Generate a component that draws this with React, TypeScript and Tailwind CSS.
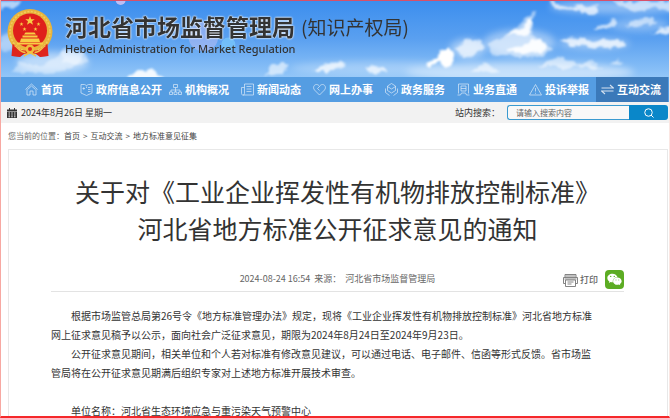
import { type ReactNode } from "react";
import { FaWeixin } from "react-icons/fa";

type NavItem = { label: string; icon: ReactNode };

const navItems: NavItem[] = [
    { label: "首页", icon: <path d="M1 13 13 2l12 11M4 13v11h6v-8h6v8h6V13M5 13l8-7 8 7" /> },
    { label: "政府信息公开", icon: <path d="M2 3h7l4 2 4-2h7v17l-11 5-11-5zM13 7v3M16 9h5M16 13h5M16 17h5M5 11h5M7.500 8.500v5" /> },
    { label: "机构概况", icon: <path d="M9 3h8v6H9zM13 9v5M4 18v-4h18v4M13 14v4M1 18h6v5H1zM10 18h6v5h-6zM19 18h6v5h-6z" /> },
    { label: "新闻动态", icon: <path d="M7 2h18v22H4c-2 0-3-1-3-3V9h6M7 2v19c0 2-1 3-3 3M11 7h10M11 12h10M11 17h10" /> },
    { label: "网上办事", icon: <path d="M13 24 3 14C-1 9 2 3 7 3c3 0 5 2 6 4 1-2 3-4 6-4 5 0 8 6 4 11zM13 7l-4 4 4 4" /> },
    { label: "政务服务", icon: <path d="m13 1 8 5v9l-8 5-8-5V6zM5 7l8 5 8-5M1 11v8l8 6M25 11v8l-8 6" /> },
    { label: "业务直通", icon: <path d="M3 21V2h20v19M8 16V6h10v10zM8 11h10M1 24h6l2-4h8l2 4h6" /> },
    { label: "投诉举报", icon: <path d="M13 3 25 24H1zM13 10v7M13 19.500v2" /> },
    { label: "互动交流", icon: <path strokeWidth="2.2" d="M1 10h24l-7-6M25 16H1l7 6" /> },
];

function Emblem() {
    return (
        <svg viewBox="0 0 92 98" className="h-[49px] w-[46px] shrink-0" aria-hidden="true">
            <path d="M14 70 11 94l15 2 8-6h24l8 6 15-2-3-24z" fill="#d9201c" />
            <circle cx="46" cy="45" r="45" fill="#e9b43c" />
            <circle cx="46" cy="45" r="40" fill="none" stroke="#f3cb5c" strokeWidth="3" strokeDasharray="4 3" />
            <circle cx="46" cy="43" r="34" fill="#df1f1b" />
            <path d="m46 14 2.500 6.500h7l-5.500 4 2 7-6-4-6 4 2-7-5.500-4h7z" fill="#f8cd45" />
            <g fill="#f8cd45">
                <path d="m29 26 1 3h3l-2.500 2 1 3-2.500-2-2.500 2 1-3-2.500-2h3zM63 26l1 3h3l-2.500 2 1 3-2.500-2-2.500 2 1-3-2.500-2h3zM35 36l1 3h3l-2.500 2 1 3-2.500-2-2.500 2 1-3-2.500-2h3zM57 36l1 3h3l-2.500 2 1 3-2.500-2-2.500 2 1-3-2.500-2h3z" />
                <path d="m34 51 3-4h18l3 4zM31 53h30v4H31zM28 59h36l2 7H26zM20 67h52v4H20z" />
            </g>
            <path d="M11 70c10 4 14 14 24 13h22c10 1 14-9 24-13l2 24-16 1-8-7H33l-8 7-16-1z" fill="#df241d" />
            <circle cx="46" cy="80" r="9" fill="#f0bd3f" />
            <circle cx="46" cy="80" r="4" fill="#df241d" />
            <path d="M15 73c9 6 11 14 22 14M77 73c-9 6-11 14-22 14M34 94l12-7 12 7" fill="none" stroke="#f2c24a" strokeWidth="3" />
        </svg>
    );
}

function Sky() {
    return (
        <svg viewBox="0 0 670 77" preserveAspectRatio="none" className="absolute inset-0 h-full w-full" aria-hidden="true">
            <defs>
                <linearGradient id="sky" x1="0" y1="0" x2="0" y2="1">
                    <stop offset="0" stopColor="#3c8eee" />
                    <stop offset="0.5" stopColor="#5aa0f0" />
                    <stop offset="1" stopColor="#92c6f8" />
                </linearGradient>
                <filter id="haze" x="-20%" y="-60%" width="140%" height="220%">
                    <feGaussianBlur stdDeviation="4" />
                </filter>
                <filter id="puff" x="-5%" y="-20%" width="110%" height="140%">
                    <feTurbulence type="fractalNoise" baseFrequency="0.1" numOctaves="4" seed="11" />
                    <feDisplacementMap in="SourceGraphic" scale="9" xChannelSelector="R" yChannelSelector="G" />
                    <feGaussianBlur stdDeviation="1.3" />
                </filter>
            </defs>
            <rect width="670" height="77" fill="url(#sky)" />
            <g fill="#dcc9f5">
                <circle cx="203" cy="36" r="15" opacity="0.4" />
                <circle cx="120" cy="-1" r="5" opacity="0.8" />
                <circle cx="228" cy="44" r="7" fill="#7fd0ff" opacity="0.6" />
            </g>
            <g fill="#fff" filter="url(#haze)" opacity="0.5">
                <ellipse cx="52" cy="62" rx="36" ry="10" />
                <ellipse cx="6" cy="42" rx="14" ry="8" opacity="0.6" />
                <ellipse cx="520" cy="72" rx="115" ry="10" />
                <ellipse cx="520" cy="42" rx="36" ry="13" opacity="0.8" />
                <ellipse cx="468" cy="48" rx="18" ry="10" opacity="0.8" />
                <ellipse cx="595" cy="43" rx="36" ry="6" opacity="0.7" />
                <ellipse cx="620" cy="6" rx="70" ry="7" opacity="0.8" />
                <ellipse cx="640" cy="24" rx="30" ry="7" opacity="0.6" />
                <ellipse cx="380" cy="68" rx="90" ry="7" opacity="0.5" />
            </g>
            <g fill="#fff" filter="url(#puff)">
                <path d="M0 0h22l-8 6-14 3z" opacity="0.6" />
                <path d="M0 36l12-3 8 8-4 8-16 3z" opacity="0.3" />
                <path d="M10 72l8-10 22 3 16-9 10-8 18 6 2 9-16 5-20 6z" opacity="0.4" />
                <path d="M62 52l12-3 10 8-8 8-14-3z" opacity="0.4" />
                <path d="M128 80l6-8 14-4 14 6 4 6z" opacity="0.9" />
                <path d="M264 75l8-10 12-3 6 4-8 8z" opacity="0.6" />
                <path d="M312 71l10-6 18-4 6 4-14 6z" opacity="0.75" />
                <path d="M365 69l8-5 10 3 5 5-14 3z" opacity="0.7" />
                <path d="M470 72l18-8 12 8zM536 66l20-9 16 4 4 8zM574 67l16-7 12 8zM610 62l8-3 8 4z" opacity="0.55" />
                <path d="M426 64l10-6 4-8 10-3 5 6-3 14-10 0 0-6-12 5z" />
                <path d="M457 50l8-11 14-1 4 10-10 8-12 0z" opacity="0.65" />
                <path d="M488 45l14-8 16-10 6-10 12-7-4 10 0 13 6 6 14 8-4 8-16 3-36-3z" opacity="0.5" />
                <path d="M508 34l14-6 6-10 5 0-2 15-10 3zM506 50l20-8 14-4 8 6-4 8-24 2z" opacity="0.9" />
                <path d="M561 41l10-4 24 4 28-2 6 7-22 3-26-4z" opacity="0.75" />
                <path d="M595 28l10-4 9-6 3 4-8 7z" opacity="0.65" />
                <path d="M626 26l10-7 16-3 6 6-16 3z" opacity="0.55" />
                <path d="M550 0l24 6 22-3 4 10-10 3-10-7-24-1z" opacity="0.7" />
                <path d="M610 0h64v12l-20-6-16 5z" opacity="0.55" />
                <path d="M652 33l10-5 12-1v7z" opacity="0.75" />
            </g>
        </svg>
    );
}

function Header() {
    return (
        <header className="relative h-[77px] shrink-0 overflow-hidden border-t border-[#d8506a]">
            <Sky />
            <div className="relative flex items-start pl-[6px] pt-2">
                <Emblem />
                <div className="pl-3 pt-[2px] text-[#333]">
                    <h1 className="flex items-center whitespace-nowrap leading-[31px]">
                        <span className="text-[23px] font-bold [text-shadow:0_0_2px_#fff,0_0_2px_#fff]">河北省市场监督管理局</span>
                        <span className="pl-[6px] text-[19px]">(知识产权局)</span>
                    </h1>
                    <p className="font-['Noto_Sans'] text-[11px] font-medium leading-[14px]">Hebei Administration for Market Regulation</p>
                </div>
            </div>
        </header>
    );
}

function Navbar() {
    return (
        <nav className="shrink-0 bg-[#559de2]">
            <ul className="flex h-[25px] pl-[19px] pr-px">
                {navItems.map((item) => {
                    const active = item.label === "互动交流";
                    return (
                        <li key={item.label} className="shrink-0 first:flex-1">
                            <a
                                href="#"
                                className={`flex h-full items-center gap-[3px] whitespace-nowrap pl-[5px] text-[11px] font-bold text-white ${active ? "bg-[#3b79b9]" : ""} ${item.label.length > 4 ? "pr-[2px]" : "pr-[7px]"}`}
                            >
                                <svg viewBox="0 0 26 26" className="size-[13px] shrink-0 opacity-80" fill="none" stroke="currentColor" strokeWidth="1.4" aria-hidden="true">
                                    {item.icon}
                                </svg>
                                {item.label}
                            </a>
                        </li>
                    );
                })}
            </ul>
        </nav>
    );
}

function DateBar() {
    return (
        <div className="flex h-[21px] shrink-0 items-center justify-between bg-[#f2f2f2] pl-[6px] pr-px text-[9px] text-[#333]">
            <div className="flex items-center gap-1">
                <svg viewBox="0 0 20 20" className="size-[10px]" fill="#333" aria-hidden="true">
                    <path d="M0 3h4V0h2v3h8V0h2v3h4v3H0zM0 7h20v13H0z" />
                    <path d="M3 10h3M8.500 10h3M14 10h3M3 14h3M8.500 14h3M14 14h3M3 17.500h3M8.500 17.500h3M14 17.500h3" stroke="#f2f2f2" strokeWidth="1.800" />
                </svg>
                <span>2024年8月26日 星期一</span>
            </div>
            <form className="flex items-center" onSubmit={(e) => e.preventDefault()}>
                <label htmlFor="search" className="pr-[7px]">站内搜索：</label>
                <input
                    id="search"
                    type="text"
                    placeholder="请输入搜索内容"
                    className="h-[15px] w-[122px] rounded-l-[3px] border border-r-0 border-[#3a9ad0] bg-[#f8f8f8] px-2 text-[8px] outline-none placeholder:text-[#666]"
                />
                <button type="submit" aria-label="搜索" className="flex h-[15px] w-[39px] items-center justify-center rounded-r-[3px] bg-[#0a87c9] text-white">
                    <svg viewBox="0 0 20 20" className="size-[10px]" fill="none" stroke="currentColor" strokeWidth="2" aria-hidden="true">
                        <circle cx="9" cy="9" r="7.500" />
                        <path d="m14 14 5 5" />
                    </svg>
                </button>
            </form>
        </div>
    );
}

function Breadcrumb() {
    return (
        <div className="flex h-[26px] shrink-0 items-center whitespace-nowrap pl-[7px] text-[8px] text-[#444]">
            <span className="text-[#666]">您当前的位置：</span>
            <div className="flex gap-[3px]">
                <a href="#">首页</a>
                <span>&gt;</span>
                <a href="#">互动交流</a>
                <span>&gt;</span>
                <a href="#">地方标准意见征集</a>
            </div>
        </div>
    );
}

function ArticleMeta() {
    return (
        <div className="mt-[18px] grid h-[26px] grid-cols-[1fr_auto_1fr] border-b border-[#e3e3e3] text-[9px] text-[#666]">
            <span />
            <span className="flex gap-1 pt-[6px] leading-[14px]">
                <span>2024-08-24 16:54</span>
                <span>来源：</span>
                <span>河北省市场监督管理局</span>
            </span>
            <div className="flex items-start justify-end gap-[7px] pt-1">
                <button type="button" className="flex items-center gap-[2px] pt-[3px] font-medium leading-[14px]">
                    <svg viewBox="0 0 30 26" className="h-[13px] w-[15px]" fill="none" stroke="#777" strokeWidth="1.800" aria-hidden="true">
                        <path d="M4 7V1h22v6M5 4h20M1 7h28v12h-4M5 19H1V7M5 12h20v13H5zM3 10h24M9 16h12M9 20h8" />
                    </svg>
                    打印
                </button>
                <button type="button" aria-label="微信" className="flex size-[19px] items-center justify-center rounded-[4px] bg-[#5cac23]">
                    <FaWeixin className="size-[15px] text-white" />
                </button>
            </div>
        </div>
    );
}

function Article() {
    return (
        <article className="border border-b-0 border-[#e8e8e8] pl-[42px] pr-[43px] pt-[23px]">
            <h2 className="whitespace-nowrap pb-px text-center text-[25px] leading-[37px] text-[#333]">
                关于对《工业企业挥发性有机物排放控制标准》
                <br />
                河北省地方标准公开征求意见的通知
            </h2>
            <ArticleMeta />
            <div className="whitespace-nowrap pt-[14px] text-[10px] leading-[19px] text-[#333]">
                <p className="indent-[2em]">
                    根据市场监管总局第26号令《地方标准管理办法》规定，现将《工业企业挥发性有机物排放控制标准》河北省地方标准
                    <br />
                    网上征求意见稿予以公示，面向社会广泛征求意见，期限为2024年8月24日至2024年9月23日。
                </p>
                <p className="indent-[2em]">
                    公开征求意见期间，相关单位和个人若对标准有修改意见建议，可以通过电话、电子邮件、信函等形式反馈。省市场监
                    <br />
                    管局将在公开征求意见期满后组织专家对上述地方标准开展技术审查。
                </p>
                <br />
                <p className="indent-[2em]">单位名称：河北省生态环境应急与重污染天气预警中心</p>
            </div>
        </article>
    );
}

export default function App() {
    return (
        <div lang="zh-CN" className="flex h-screen w-full flex-col overflow-hidden border-b-2 border-l border-r border-b-[#f5282a] border-l-[#f7a8a2] border-r-[#fbe6e2] bg-white font-['Noto_Sans_CJK_SC',sans-serif]">
            <Header />
            <Navbar />
            <DateBar />
            <Breadcrumb />
            <main className="min-h-0 flex-1 overflow-hidden pl-[7px] pr-px">
                <Article />
            </main>
        </div>
    );
}
